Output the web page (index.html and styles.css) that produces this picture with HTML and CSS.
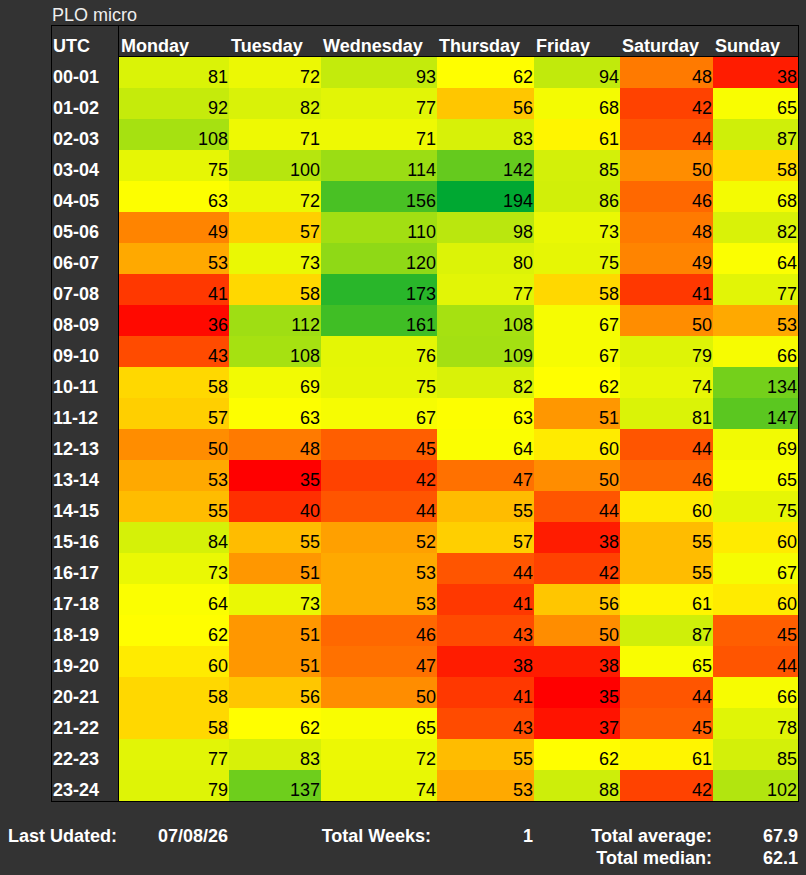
FILE: index.html
```html
<!DOCTYPE html>
<html lang="en">
<head>
<meta charset="utf-8">
<title>PLO micro</title>
<link rel="stylesheet" href="styles.css">
</head>
<body>
<main class="page">
  <section class="board">
    <h1 class="title">PLO micro</h1>
    <div class="grid" id="grid">
      <div class="hd utc">UTC</div>
      <div class="hd day">Monday</div>
      <div class="hd day">Tuesday</div>
      <div class="hd day">Wednesday</div>
      <div class="hd day">Thursday</div>
      <div class="hd day">Friday</div>
      <div class="hd day">Saturday</div>
      <div class="hd day">Sunday</div>

      <div class="utc">00-01</div><div class="val">81</div><div class="val">72</div><div class="val">93</div><div class="val">62</div><div class="val">94</div><div class="val">48</div><div class="val">38</div>
      <div class="utc">01-02</div><div class="val">92</div><div class="val">82</div><div class="val">77</div><div class="val">56</div><div class="val">68</div><div class="val">42</div><div class="val">65</div>
      <div class="utc">02-03</div><div class="val">108</div><div class="val">71</div><div class="val">71</div><div class="val">83</div><div class="val">61</div><div class="val">44</div><div class="val">87</div>
      <div class="utc">03-04</div><div class="val">75</div><div class="val">100</div><div class="val">114</div><div class="val">142</div><div class="val">85</div><div class="val">50</div><div class="val">58</div>
      <div class="utc">04-05</div><div class="val">63</div><div class="val">72</div><div class="val">156</div><div class="val">194</div><div class="val">86</div><div class="val">46</div><div class="val">68</div>
      <div class="utc">05-06</div><div class="val">49</div><div class="val">57</div><div class="val">110</div><div class="val">98</div><div class="val">73</div><div class="val">48</div><div class="val">82</div>
      <div class="utc">06-07</div><div class="val">53</div><div class="val">73</div><div class="val">120</div><div class="val">80</div><div class="val">75</div><div class="val">49</div><div class="val">64</div>
      <div class="utc">07-08</div><div class="val">41</div><div class="val">58</div><div class="val">173</div><div class="val">77</div><div class="val">58</div><div class="val">41</div><div class="val">77</div>
      <div class="utc">08-09</div><div class="val">36</div><div class="val">112</div><div class="val">161</div><div class="val">108</div><div class="val">67</div><div class="val">50</div><div class="val">53</div>
      <div class="utc">09-10</div><div class="val">43</div><div class="val">108</div><div class="val">76</div><div class="val">109</div><div class="val">67</div><div class="val">79</div><div class="val">66</div>
      <div class="utc">10-11</div><div class="val">58</div><div class="val">69</div><div class="val">75</div><div class="val">82</div><div class="val">62</div><div class="val">74</div><div class="val">134</div>
      <div class="utc">11-12</div><div class="val">57</div><div class="val">63</div><div class="val">67</div><div class="val">63</div><div class="val">51</div><div class="val">81</div><div class="val">147</div>
      <div class="utc">12-13</div><div class="val">50</div><div class="val">48</div><div class="val">45</div><div class="val">64</div><div class="val">60</div><div class="val">44</div><div class="val">69</div>
      <div class="utc">13-14</div><div class="val">53</div><div class="val">35</div><div class="val">42</div><div class="val">47</div><div class="val">50</div><div class="val">46</div><div class="val">65</div>
      <div class="utc">14-15</div><div class="val">55</div><div class="val">40</div><div class="val">44</div><div class="val">55</div><div class="val">44</div><div class="val">60</div><div class="val">75</div>
      <div class="utc">15-16</div><div class="val">84</div><div class="val">55</div><div class="val">52</div><div class="val">57</div><div class="val">38</div><div class="val">55</div><div class="val">60</div>
      <div class="utc">16-17</div><div class="val">73</div><div class="val">51</div><div class="val">53</div><div class="val">44</div><div class="val">42</div><div class="val">55</div><div class="val">67</div>
      <div class="utc">17-18</div><div class="val">64</div><div class="val">73</div><div class="val">53</div><div class="val">41</div><div class="val">56</div><div class="val">61</div><div class="val">60</div>
      <div class="utc">18-19</div><div class="val">62</div><div class="val">51</div><div class="val">46</div><div class="val">43</div><div class="val">50</div><div class="val">87</div><div class="val">45</div>
      <div class="utc">19-20</div><div class="val">60</div><div class="val">51</div><div class="val">47</div><div class="val">38</div><div class="val">38</div><div class="val">65</div><div class="val">44</div>
      <div class="utc">20-21</div><div class="val">58</div><div class="val">56</div><div class="val">50</div><div class="val">41</div><div class="val">35</div><div class="val">44</div><div class="val">66</div>
      <div class="utc">21-22</div><div class="val">58</div><div class="val">62</div><div class="val">65</div><div class="val">43</div><div class="val">37</div><div class="val">45</div><div class="val">78</div>
      <div class="utc">22-23</div><div class="val">77</div><div class="val">83</div><div class="val">72</div><div class="val">55</div><div class="val">62</div><div class="val">61</div><div class="val">85</div>
      <div class="utc">23-24</div><div class="val">79</div><div class="val">137</div><div class="val">74</div><div class="val">53</div><div class="val">88</div><div class="val">42</div><div class="val">102</div>
    </div>
  </section>

  <footer class="summary">
    <div class="lbl">Last Udated:</div><div class="num">07/08/26</div>
    <div class="lbl">Total Weeks:</div><div class="num">1</div>
    <div class="lbl">Total average:</div><div class="num">67.9</div>
    <div class="lbl skip">Total median:</div><div class="num">62.1</div>
  </footer>
</main>
<script src="script.js"></script>
</body>
</html>
```

FILE: styles.css
```css
* { box-sizing: border-box; }

html, body {
  margin: 0;
  padding: 0;
  background: #333333;
}

body {
  font-family: "Liberation Sans", Arial, sans-serif;
  font-size: 18px;
  color: #ffffff;
}

.page {
  padding-top: 5px;
}

.board {
  margin-left: 51px;
  width: 748px;
}

.title {
  margin: 0;
  padding-left: 1px;
  font-size: 18px;
  font-weight: normal;
  line-height: 20px;
  color: #eeeeee;
}

.grid {
  display: grid;
  grid-template-columns: 67px 110px 92px 116px 97px 86px 93px 85px;
  grid-auto-rows: 31px;
  border: 1px solid #000000;
}

.grid > div {
  padding-top: 10px;
  line-height: 20px;
  white-space: nowrap;
  overflow: hidden;
}

.hd {
  font-weight: bold;
  color: #ffffff;
}

.day {
  padding-left: 2px;
  border-bottom: 1px solid #000000;
}

.utc {
  font-weight: bold;
  color: #ffffff;
  padding-left: 1px;
  border-right: 1px solid #000000;
}

.val {
  color: #000000;
  text-align: right;
  padding-right: 1px;
  background: #ffff00;
}

.summary {
  display: grid;
  grid-template-columns: 117px 111px 203px 102px 179px 86px;
  margin-top: 23px;
  font-weight: bold;
  line-height: 22px;
  color: #ffffff;
}

.summary > div {
  text-align: right;
  white-space: nowrap;
}

.summary .skip {
  grid-column: 5;
}
```

FILE: script.js
```js
(function () {
  var cells = document.querySelectorAll('#grid .val');
  var vals = [];
  cells.forEach(function (c) { vals.push(parseFloat(c.textContent)); });
  var min = Math.min.apply(null, vals);
  var max = Math.max.apply(null, vals);
  var mid = 62.1;
  function colour(v) {
    var t;
    if (v <= mid) {
      t = (v - min) / (mid - min);
      return 'rgb(255,' + Math.round(255 * t) + ',0)';
    }
    t = (v - mid) / (max - mid);
    return 'rgb(' + Math.round(255 * (1 - t)) + ',' + Math.round(255 - 87 * t) + ',' + Math.round(50 * t) + ')';
  }
  cells.forEach(function (c, i) {
    c.style.backgroundColor = colour(vals[i]);
  });
})();
```
